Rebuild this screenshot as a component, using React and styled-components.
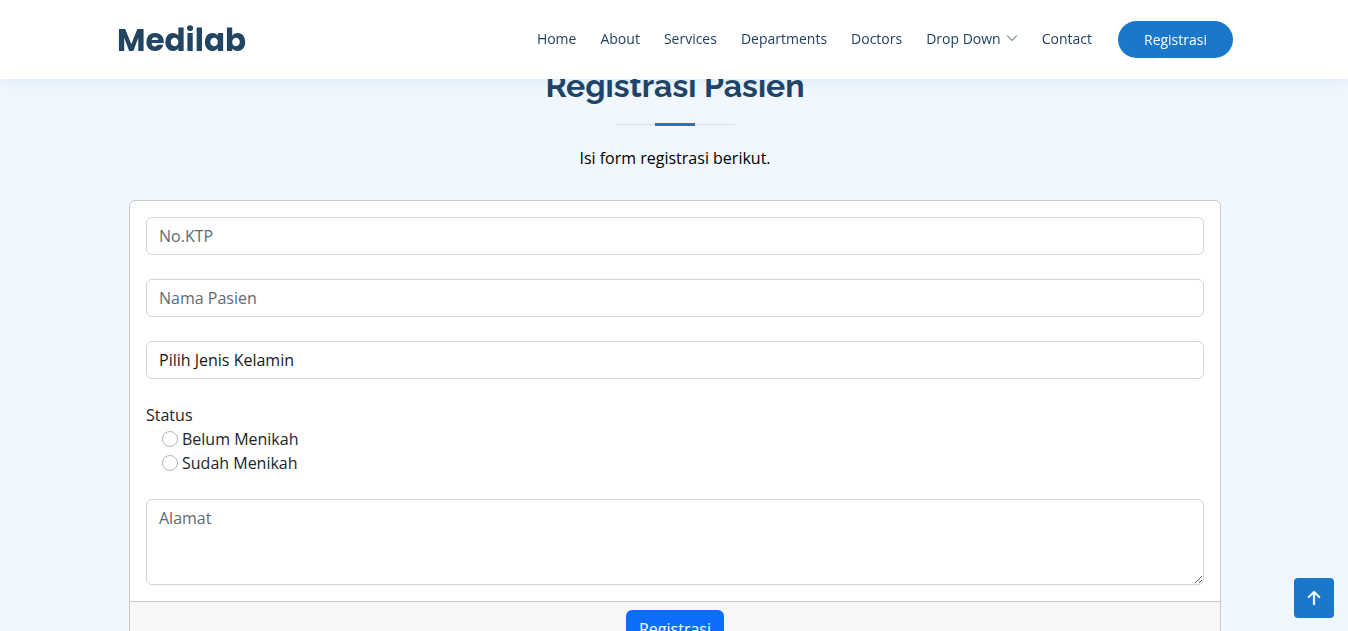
import React from "react";
import styled, { createGlobalStyle } from "styled-components";

const GlobalStyle = createGlobalStyle`
  *, *::before, *::after { box-sizing: border-box; }
  html { scrollbar-width: none; }
  body {
    margin: 0;
    background: #f1f7fe;
    color: #212529;
    font: 400 16px/24px "Open Sans", "Liberation Sans", sans-serif;
  }
`;

const Container = styled.div`
  width: 100%;
  max-width: 1140px;
  margin: 0 auto;
  padding: 0 11px 0 13px;
`;

const Header = styled.header`
  position: fixed;
  inset: 0 0 auto;
  z-index: 10;
  padding: 21px 0;
  background: #fff;
  box-shadow: 0 2px 15px rgba(25, 119, 204, 0.1);
`;

const HeaderRow = styled(Container)`
  display: flex;
  align-items: center;
`;

const Logo = styled.a`
  margin-right: auto;
  color: #234564;
  font: 700 31px/36px Poppins, Inter, sans-serif;
  text-decoration: none;
`;

const NavList = styled.ul`
  display: flex;
  gap: 24px;
  margin: 0;
  padding: 0 0 2px;
  list-style: none;
`;

const NavLink = styled.a`
  display: flex;
  align-items: center;
  gap: 5px;
  color: #1f4061;
  font-size: 14px;
  line-height: 20px;
  white-space: nowrap;
  text-decoration: none;
`;

const PillLink = styled.a`
  margin-left: 26px;
  padding: 8px 26px;
  border-radius: 50px;
  background: #1977cc;
  color: #fff;
  font-size: 14px;
  line-height: 21px;
  text-decoration: none;
`;

const Section = styled.section`
  padding: 67px 0 60px;
`;

const Intro = styled.div`
  padding-bottom: 30px;
  color: #000;
  text-align: center;
`;

const Title = styled.h2`
  position: relative;
  margin: 0 0 20px;
  padding-bottom: 21px;
  color: #1f4465;
  font: 700 32px/38px Raleway, Inter, sans-serif;

  &::before, &::after {
    content: "";
    position: absolute;
    left: 50%;
    transform: translateX(-50%);
  }
  &::before { bottom: 1px; width: 120px; height: 1px; background: #ddd; }
  &::after { bottom: 0; width: 40px; height: 3px; background: #1977cc; }
`;

const Lead = styled.p`
  margin: 0;
`;

const Card = styled.form`
  margin: 0 12px;
  border: 1px solid #c8cacc;
  border-radius: 6px;
  background: #fff;
  overflow: hidden;
`;

const CardBody = styled.div`
  display: flex;
  flex-direction: column;
  gap: 24px;
  padding: 16px;
`;

const CardFooter = styled.div`
  padding: 8px 16px;
  border-top: 1px solid #c8cacc;
  background: #f7f7f7;
  text-align: center;
`;

const Field = styled.input`
  display: block;
  width: 100%;
  height: ${({ $tall }) => ($tall ? "86px" : "38px")};
  padding: 6px 12px;
  border: 1px solid #ced4da;
  border-radius: 6px;
  background: #fff;
  color: #15181b;
  font: inherit;
  appearance: none;
  resize: vertical;

  &::placeholder { color: #626a72; opacity: 1; }
`;

const RadioGroup = styled.fieldset`
  margin: 0;
  padding: 0;
  border: 0;
`;

const Legend = styled.legend`
  padding: 0;
`;

const RadioRow = styled.div`
  display: flex;
  align-items: center;
  gap: 4px;
  padding-left: 16px;
`;

const Radio = styled.input`
  width: 16px;
  height: 16px;
  margin: 0;
  border: 1px solid #b5b5b5;
  border-radius: 50%;
  background: #fff;
  appearance: none;

  &:checked { border: 5px solid #0d6efd; }
`;

const SubmitButton = styled.button`
  height: 38px;
  padding: 6px 13px;
  border: 0;
  border-radius: 6px;
  background: #0d6efd;
  color: #fff;
  font: inherit;
`;

const BackToTop = styled.a`
  position: fixed;
  right: 14px;
  bottom: 13px;
  z-index: 11;
  display: flex;
  align-items: center;
  justify-content: center;
  width: 40px;
  height: 40px;
  border-radius: 4px;
  background: #1977cc;
  color: #fff;
`;

const pages = ["Home", "About", "Services", "Departments", "Doctors", "Drop Down", "Contact"];

function ChevronDown() {
  return (
    <svg width="12" height="12" viewBox="0 0 16 16" fill="none" stroke="currentColor" strokeWidth="1.3" strokeLinecap="round" strokeLinejoin="round" aria-hidden="true">
      <path d="M2 4l6 6 6-6" />
    </svg>
  );
}

function ArrowUp() {
  return (
    <svg width="28" height="28" viewBox="0 0 16 16" fill="currentColor" stroke="currentColor" strokeWidth="0.2" aria-hidden="true">
      <path fillRule="evenodd" d="M8 12a.5.5 0 0 0 .5-.5V5.707l2.146 2.147a.5.5 0 0 0 .708-.708l-3-3a.5.5 0 0 0-.708 0l-3 3a.5.5 0 1 0 .708.708L7.5 5.707V11.5a.5.5 0 0 0 .5.5z" />
    </svg>
  );
}

export default function App() {
  return (
    <>
      <GlobalStyle />
      <Header>
        <HeaderRow>
          <Logo href="#">Medilab</Logo>
          <nav>
            <NavList>
              {pages.map((page) => (
                <li key={page}>
                  <NavLink href="#">
                    {page}
                    {page === "Drop Down" && <ChevronDown />}
                  </NavLink>
                </li>
              ))}
            </NavList>
          </nav>
          <PillLink href="#registrasi">Registrasi</PillLink>
        </HeaderRow>
      </Header>
      <main>
        <Section id="registrasi">
          <Container>
            <Intro>
              <Title>Registrasi Pasien</Title>
              <Lead>Isi form registrasi berikut.</Lead>
            </Intro>
            <Card onSubmit={(event) => event.preventDefault()}>
              <CardBody>
                <Field type="text" name="ktp" placeholder="No.KTP" aria-label="No.KTP" />
                <Field type="text" name="nama" placeholder="Nama Pasien" aria-label="Nama Pasien" />
                <Field as="select" name="kelamin" aria-label="Jenis Kelamin">
                  <option>Pilih Jenis Kelamin</option>
                </Field>
                <RadioGroup>
                  <Legend>Status</Legend>
                  <RadioRow>
                    <Radio type="radio" name="status" id="belum" />
                    <label htmlFor="belum">Belum Menikah</label>
                  </RadioRow>
                  <RadioRow>
                    <Radio type="radio" name="status" id="sudah" />
                    <label htmlFor="sudah">Sudah Menikah</label>
                  </RadioRow>
                </RadioGroup>
                <Field as="textarea" $tall name="alamat" placeholder="Alamat" aria-label="Alamat" />
              </CardBody>
              <CardFooter>
                <SubmitButton type="submit">Registrasi</SubmitButton>
              </CardFooter>
            </Card>
          </Container>
        </Section>
      </main>
      <BackToTop href="#" aria-label="Back to top">
        <ArrowUp />
      </BackToTop>
    </>
  );
}
